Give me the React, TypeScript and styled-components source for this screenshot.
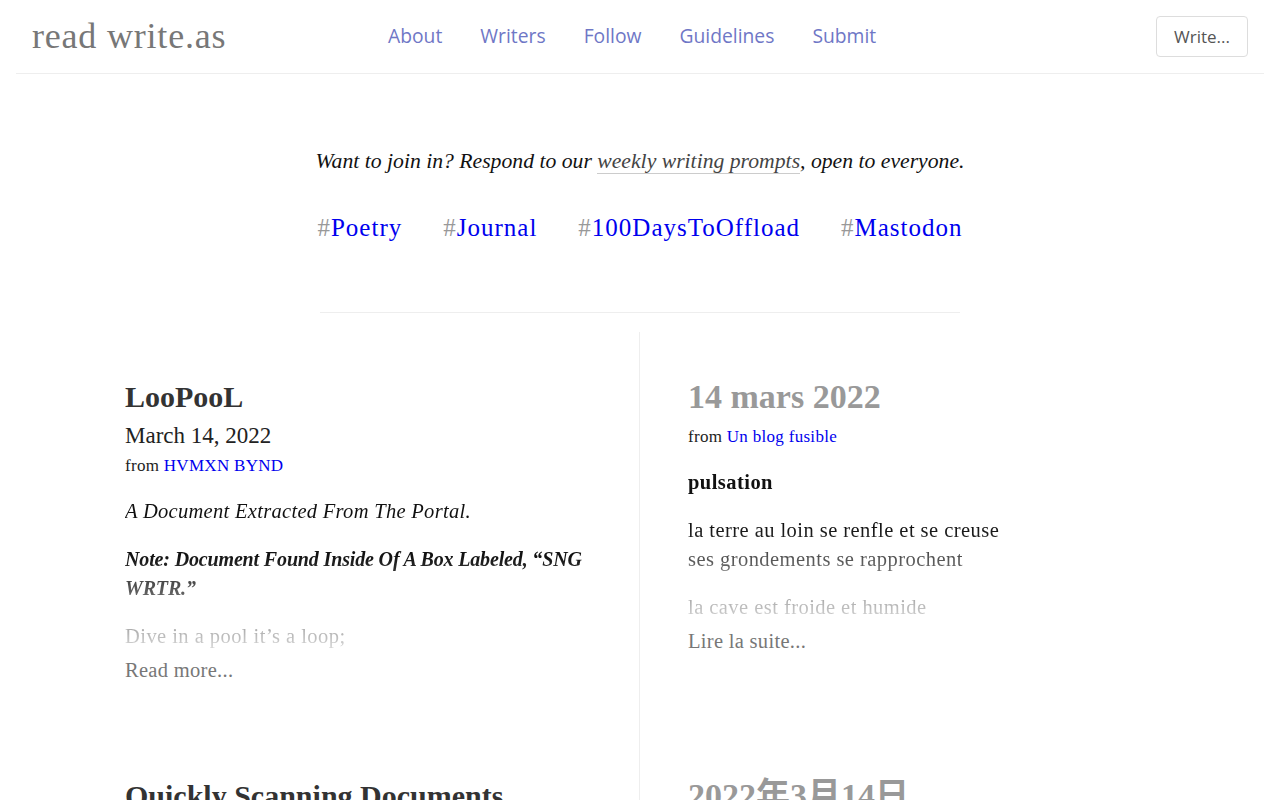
import React from "react";
import styled, { createGlobalStyle } from "styled-components";

const GlobalStyle = createGlobalStyle`
  html, body { margin: 0; padding: 0; background: #fff; }
  body { font-family: "Liberation Serif", "Noto Sans CJK JP", serif; color: #111; }
  * { box-sizing: border-box; }
`;

const HeaderWrap = styled.header`
  padding: 0 16px;
`;

const HeaderBar = styled.div`
  display: flex;
  align-items: center;
  height: 74px;
  padding: 0 16px;
  border-bottom: 1px solid #eee;
`;

const Logo = styled.a`
  display: block;
  width: 356px;
  font-family: "Liberation Serif", serif;
  font-size: 36px;
  letter-spacing: 0.8px;
  color: #777;
  text-decoration: none;
  line-height: 1;
  margin-top: -2px;
`;

const Nav = styled.nav`
  display: flex;
  gap: 38px;
  margin-top: -2px;
`;

const NavLink = styled.a`
  font-family: "Open Sans", sans-serif;
  font-size: 19.3px;
  color: #6f77c6;
  text-decoration: none;
`;

const WriteButton = styled.button`
  margin-left: auto;
  font-family: "Open Sans", sans-serif;
  font-size: 17px;
  line-height: 23px;
  color: #555;
  background: #fff;
  border: 1px solid #ddd;
  border-radius: 4px;
  padding: 8px 17px;
`;

const Prompt = styled.p`
  margin: 72px 0 0;
  text-align: center;
  font-style: italic;
  font-size: 21.7px;
  line-height: 30px;
  color: #111;
`;

const PromptLink = styled.a`
  color: #444;
  text-decoration: none;
  border-bottom: 1px solid #ccc;
`;

const Tags = styled.ul`
  list-style: none;
  margin: 35px 0 0;
  padding: 0;
  display: flex;
  justify-content: center;
  gap: 41px;
  font-size: 25px;
  line-height: 34px;
  letter-spacing: 1px;
`;

const Tag = styled.li`
  color: #999;
`;

const TagLink = styled.a`
  color: #0000ee;
  text-decoration: none;
`;

const Divider = styled.hr`
  width: 640px;
  margin: 67px auto 0;
  border: 0;
  border-top: 1px solid #eee;
`;

const Grid = styled.div`
  width: 1030px;
  margin: 19px auto 0;
  display: grid;
  grid-template-columns: 1fr 1fr;
`;

const Post = styled.article<{ $side: "left" | "right" }>`
  padding: ${(p) => (p.$side === "left" ? "46px 48px 46px 0" : "46px 0 46px 48px")};
  border-right: ${(p) => (p.$side === "left" ? "1px solid #eee" : "0")};
`;

const Title = styled.h2<{ $isDate?: boolean }>`
  margin: 0;
  font-weight: bold;
  font-size: ${(p) => (p.$isDate ? "34px" : "30px")};
  line-height: 38px;
  color: ${(p) => (p.$isDate ? "#999" : "#333")};
`;

const PostDate = styled.div`
  margin-top: 4px;
  font-size: 23px;
  line-height: 32px;
  color: #222;
`;

const From = styled.div<{ $gap: number }>`
  margin-top: ${(p) => p.$gap}px;
  font-size: 17px;
  line-height: 24px;
  letter-spacing: 0.3px;
  color: #222;
`;

const FromLink = styled.a`
  color: #0000ee;
  text-decoration: none;
`;

const Excerpt = styled.div`
  -webkit-mask-image: linear-gradient(to bottom, #000 calc(100% - 95px), rgba(0, 0, 0, 0.15) 100%);
  mask-image: linear-gradient(to bottom, #000 calc(100% - 95px), rgba(0, 0, 0, 0.15) 100%);
`;

const Para = styled.p<{ $variant?: "italic" | "bolditalic" | "bold" }>`
  margin: 19px 0 0;
  font-size: ${(p) => (p.$variant === "bolditalic" ? "20px" : "20.5px")};
  line-height: 29px;
  color: #111;
  letter-spacing: ${(p) =>
    p.$variant === "bolditalic" ? "-0.15px" : p.$variant === "italic" ? "0.3px" : "0.45px"};
  font-style: ${(p) => (p.$variant === "italic" || p.$variant === "bolditalic" ? "italic" : "normal")};
  font-weight: ${(p) => (p.$variant === "bold" || p.$variant === "bolditalic" ? "bold" : "normal")};
`;

const ReadMore = styled.a`
  display: block;
  margin-top: 5px;
  font-size: 20.5px;
  line-height: 29px;
  letter-spacing: 0.3px;
  color: #777;
  text-decoration: none;
`;

export default function App() {
  return (
    <>
      <GlobalStyle />
      <HeaderWrap>
        <HeaderBar>
          <Logo href="#">read write.as</Logo>
          <Nav>
            <NavLink href="#">About</NavLink>
            <NavLink href="#">Writers</NavLink>
            <NavLink href="#">Follow</NavLink>
            <NavLink href="#">Guidelines</NavLink>
            <NavLink href="#">Submit</NavLink>
          </Nav>
          <WriteButton>Write...</WriteButton>
        </HeaderBar>
      </HeaderWrap>
      <main>
        <Prompt>
          Want to join in? Respond to our <PromptLink href="#">weekly writing prompts</PromptLink>, open to everyone.
        </Prompt>
        <Tags>
          {["Poetry", "Journal", "100DaysToOffload", "Mastodon"].map((t) => (
            <Tag key={t}>
              #<TagLink href="#">{t}</TagLink>
            </Tag>
          ))}
        </Tags>
        <Divider />
        <Grid>
          <Post $side="left">
            <Title>LooPooL</Title>
            <PostDate>March 14, 2022</PostDate>
            <From $gap={2}>
              from <FromLink href="#">HVMXN BYND</FromLink>
            </From>
            <Excerpt>
              <Para $variant="italic">A Document Extracted From The Portal.</Para>
              <Para $variant="bolditalic">Note: Document Found Inside Of A Box Labeled, “SNG WRTR.”</Para>
              <Para>Dive in a pool it’s a loop;</Para>
            </Excerpt>
            <ReadMore href="#">Read more...</ReadMore>
          </Post>
          <Post $side="right">
            <Title $isDate>14 mars 2022</Title>
            <From $gap={9}>
              from <FromLink href="#">Un blog fusible</FromLink>
            </From>
            <Excerpt>
              <Para $variant="bold">pulsation</Para>
              <Para>
                la terre au loin se renfle et se creuse
                <br />
                ses grondements se rapprochent
              </Para>
              <Para>la cave est froide et humide</Para>
            </Excerpt>
            <ReadMore href="#">Lire la suite...</ReadMore>
          </Post>
          <Post $side="left">
            <Title>Quickly Scanning Documents</Title>
            <PostDate>March 14, 2022</PostDate>
            <From $gap={2}>
              from <FromLink href="#">Notes</FromLink>
            </From>
            <Excerpt>
              <Para>A quick note on scanning documents.</Para>
            </Excerpt>
            <ReadMore href="#">Read more...</ReadMore>
          </Post>
          <Post $side="right">
            <Title $isDate>2022年3月14日</Title>
            <From $gap={9}>
              from <FromLink href="#">Blog</FromLink>
            </From>
            <Excerpt>
              <Para>…</Para>
            </Excerpt>
            <ReadMore href="#">Read more...</ReadMore>
          </Post>
        </Grid>
      </main>
    </>
  );
}
